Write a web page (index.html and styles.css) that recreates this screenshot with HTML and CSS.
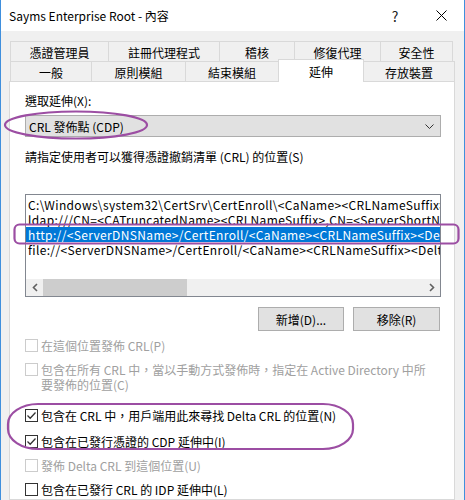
FILE: index.html
```html
<!DOCTYPE html>
<html lang="zh-Hant">
<head>
<meta charset="utf-8">
<title>Sayms Enterprise Root - 內容</title>
<link rel="stylesheet" href="styles.css">
</head>
<body>
<div class="window">
  <div class="titlebar">
    <span class="title">Sayms Enterprise Root - 內容</span>
    <span class="tbtn help">?</span>
    <span class="tbtn close"><svg width="11" height="11" viewBox="0 0 11 11"><path d="M0.5 0.5 L10.5 10.5 M10.5 0.5 L0.5 10.5" stroke="#000" stroke-width="1" fill="none"/></svg></span>
  </div>
  <div class="client">
    <div class="tabs">
      <div class="tabrow">
        <div class="tab w-a1">憑證管理員</div>
        <div class="tab w-a2">註冊代理程式</div>
        <div class="tab w-a3">稽核</div>
        <div class="tab w-a4">修復代理</div>
        <div class="tab w-a5">安全性</div>
      </div>
      <div class="tabrow">
        <div class="tab w-b1">一般</div>
        <div class="tab w-b2">原則模組</div>
        <div class="tab w-b3">結束模組</div>
        <div class="tab w-b4 selected">延伸</div>
        <div class="tab w-b5">存放裝置</div>
      </div>
    </div>
    <div class="panel">
      <div class="label">選取延伸(X):</div>
      <div class="combo">
        <span>CRL 發佈點 (CDP)</span>
        <svg class="chev" width="9" height="5" viewBox="0 0 9 5"><path d="M0.5 0.5 L4.5 4.5 L8.5 0.5" stroke="#333" stroke-width="1" fill="none"/></svg>
      </div>
      <div class="label desc">請指定使用者可以獲得憑證撤銷清單 (CRL) 的位置(S)</div>
      <div class="listbox">
        <div class="items">
          <div class="item">C:\Windows\system32\CertSrv\CertEnroll\&lt;CaName&gt;&lt;CRLNameSuffix&gt;&lt;DeltaCRLAllowed&gt;.crl</div>
          <div class="item">ldap:///CN=&lt;CATruncatedName&gt;&lt;CRLNameSuffix&gt;,CN=&lt;ServerShortName&gt;,CN=CDP,CN=Public Key Services</div>
          <div class="item sel">http://&lt;ServerDNSName&gt;/CertEnroll/&lt;CaName&gt;&lt;CRLNameSuffix&gt;&lt;DeltaCRLAllowed&gt;.crl</div>
          <div class="item">file://&lt;ServerDNSName&gt;/CertEnroll/&lt;CaName&gt;&lt;CRLNameSuffix&gt;&lt;DeltaCRLAllowed&gt;.crl</div>
        </div>
        <div class="hscroll">
          <span class="sarrow"><svg width="6" height="9" viewBox="0 0 6 9"><path d="M5 1 L1.5 4.5 L5 8" stroke="#606060" stroke-width="1.6" fill="none"/></svg></span>
          <span class="track"><span class="thumb"></span></span>
          <span class="sarrow"><svg width="6" height="9" viewBox="0 0 6 9"><path d="M1 1 L4.5 4.5 L1 8" stroke="#606060" stroke-width="1.6" fill="none"/></svg></span>
        </div>
      </div>
      <div class="buttons">
        <div class="btn">新增(D)...</div>
        <div class="btn">移除(R)</div>
      </div>
      <div class="checks">
        <div class="check disabled r1"><span class="box"></span><span class="ctext">在這個位置發佈 CRL(P)</span></div>
        <div class="check disabled r2"><span class="box"></span><span class="ctext">包含在所有 CRL 中，當以手動方式發佈時，指定在 Active Directory 中所<br>要發佈的位置(C)</span></div>
        <div class="check r3"><span class="box"><svg width="11" height="11" viewBox="0 0 11 11"><path d="M1.5 5.5 L4.2 8.2 L9.5 2.5" stroke="#333" stroke-width="1.3" fill="none"/></svg></span><span class="ctext">包含在 CRL 中，用戶端用此來尋找 Delta CRL 的位置(N)</span></div>
        <div class="check r4"><span class="box"><svg width="11" height="11" viewBox="0 0 11 11"><path d="M1.5 5.5 L4.2 8.2 L9.5 2.5" stroke="#333" stroke-width="1.3" fill="none"/></svg></span><span class="ctext">包含在已發行憑證的 CDP 延伸中(I)</span></div>
        <div class="check disabled r5"><span class="box"></span><span class="ctext">發佈 Delta CRL 到這個位置(U)</span></div>
        <div class="check r6"><span class="box"></span><span class="ctext">包含在已發行 CRL 的 IDP 延伸中(L)</span></div>
      </div>
    </div>
  </div>
  <svg class="annot" width="465" height="500" viewBox="0 0 465 500">
    <ellipse cx="76" cy="125" rx="71" ry="13.5" fill="none" stroke="#9c4ea3" stroke-width="2.2"/>
    <rect x="14.5" y="224.5" width="444" height="19" rx="5" ry="5" fill="none" stroke="#9c4ea3" stroke-width="2.2"/>
    <rect x="8" y="404" width="345" height="45" rx="30" ry="20" fill="none" stroke="#9c4ea3" stroke-width="2.2"/>
  </svg>
</div>
</body>
</html>
```
FILE: styles.css
```css
* { box-sizing: border-box; }
html, body { margin: 0; padding: 0; }
body {
  width: 465px;
  height: 500px;
  overflow: hidden;
  background: #fff;
  font-family: "Noto Sans CJK TC", "Noto Sans", sans-serif;
  font-size: 12px;
  color: #000;
}
.window {
  position: relative;
  width: 465px;
  height: 500px;
  border-left: 1px solid #3f8fdd;
  border-right: 1px solid #3f8fdd;
  display: flex;
  flex-direction: column;
}
.titlebar {
  height: 31px;
  flex: none;
  background: #fff;
  display: flex;
  align-items: center;
  padding-left: 8px;
}
.title { flex: 1; font-size: 12px; white-space: nowrap; }
.tbtn {
  width: 46px;
  height: 31px;
  display: flex;
  align-items: center;
  justify-content: center;
}
.help { font-size: 14px; color: #222; }
.client {
  flex: 1;
  background: #f0f0f0;
  padding: 10px 9px 0 8px;
  display: flex;
  flex-direction: column;
}
.tabs { margin-left: 1px; flex: none; }
.tabrow { display: flex; height: 20px; }
.tab {
  height: 21px;
  border: 1px solid #d9d9d9;
  border-bottom: none;
  margin-left: -1px;
  background: #f0f0f0;
  display: flex;
  align-items: center;
  justify-content: center;
  white-space: nowrap;
  flex: none;
}
.tab:first-child { margin-left: 0; }
.tab.selected {
  background: #fff;
  height: 23px;
  margin-top: -2px;
  position: relative;
  z-index: 1;
  border-color: #d9d9d9;
}
.w-a1 { width: 99px; }
.w-a2 { width: 112px; }
.w-a3 { width: 76px; }
.w-a4 { width: 87px; }
.w-a5 { width: 73px; }
.w-b1 { width: 82px; }
.w-b2 { width: 95px; }
.w-b3 { width: 94px; }
.w-b4 { width: 86px; }
.w-b5 { width: 92px; }

.panel {
  flex: 1;
  background: #fff;
  border: 1px solid #d9d9d9;
  padding: 11px 13px 0 15px;
  display: flex;
  flex-direction: column;
}
.label { line-height: 16px; height: 16px; white-space: nowrap; }
.combo {
  margin-top: 6px;
  height: 22px;
  background: #e1e1e1;
  border: 1px solid #adadad;
  display: flex;
  align-items: center;
  justify-content: space-between;
  padding: 0 3px 0 3px;
}
.chev { margin-right: 3px; }
.desc { margin-top: 12px; }
.listbox {
  margin-top: 29px;
  height: 103px;
  border: 1px solid #828790;
  display: flex;
  flex-direction: column;
}
.items {
  flex: 1;
  padding-top: 2px;
  overflow: hidden;
}
.item {
  height: 15px;
  line-height: 15px;
  white-space: nowrap;
  overflow: hidden;
  padding-left: 2px;
  letter-spacing: 0.35px;
}
.item.sel { background: #0078d7; color: #fff; }
.hscroll {
  height: 17px;
  flex: none;
  background: #f0f0f0;
  display: flex;
}
.sarrow {
  width: 17px;
  display: flex;
  align-items: center;
  justify-content: center;
}
.track { flex: 1; display: flex; align-items: stretch; padding: 0; }
.thumb { width: 144px; background: #cdcdcd; }
.buttons {
  margin-top: 10px;
  display: flex;
  justify-content: flex-end;
  gap: 9px;
  padding-right: 1px;
}
.btn {
  width: 86px;
  height: 24px;
  background: #e1e1e1;
  border: 1px solid #adadad;
  display: flex;
  align-items: center;
  justify-content: center;
}
.btn + .btn { width: 87px; }
.checks { display: flex; flex-direction: column; }
.check {
  display: flex;
  align-items: flex-start;
  line-height: 15px;
  white-space: nowrap;
}
.box {
  width: 13px;
  height: 13px;
  margin-top: 1px;
  border: 1px solid #333;
  background: #fff;
  flex: none;
  display: flex;
  align-items: center;
  justify-content: center;
}
.ctext { margin-left: 3px; }
.check.disabled { color: #a0a0a0; }
.check.disabled .box { border-color: #cccccc; }
.r1 { margin-top: 7px; }
.r2 { margin-top: 9px; }
.r3 { margin-top: 16px; }
.r4 { margin-top: 11px; }
.r5 { margin-top: 9px; }
.r6 { margin-top: 9px; }
.annot {
  position: absolute;
  left: -1px;
  top: 0;
  pointer-events: none;
}
```
